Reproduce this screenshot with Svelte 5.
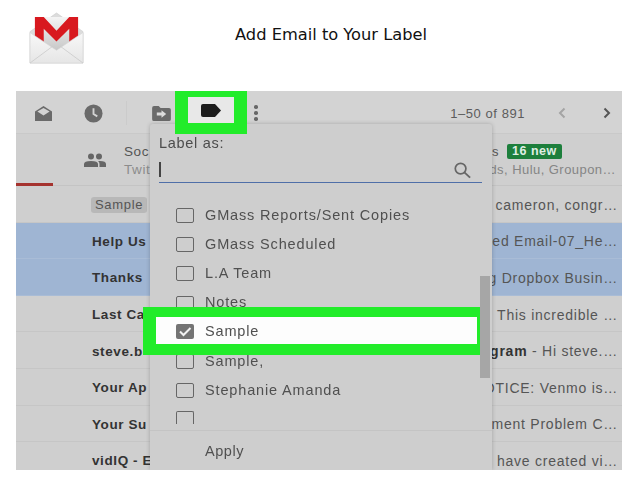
<script>
  const rows = [
    { from: '', label: 'Sample', text: 'cameron, congr…' },
    { from: 'Help Us', text: 'eed Email-07_He…', picked: true },
    { from: 'Thanks', text: 'g Dropbox Busin…', picked: true },
    { from: 'Last Ca', text: 'This incredible …' },
    { from: 'steve.b', strong: 'gram', text: ' - Hi steve.…' },
    { from: 'Your Ap', text: 'OTICE: Venmo is…' },
    { from: 'Your Su', text: 'ment Problem C…' },
    { from: 'vidIQ - E', text: 'have created vi…' }
  ];
  const labels = [
    { name: 'GMass Reports/Sent Copies' },
    { name: 'GMass Scheduled' },
    { name: 'L.A Team' },
    { name: 'Notes' },
    { name: 'Sample', checked: true },
    { name: 'Sample,' },
    { name: 'Stephanie Amanda' },
    { name: '' }
  ];
</script>

<div class="slide">
  <header>
    <svg class="logo" viewBox="0 0 56 54" width="55" height="53">
      <defs>
        <linearGradient id="env" x1="0" y1="0" x2="0" y2="1">
          <stop offset="0" stop-color="#f8f8f8" />
          <stop offset="1" stop-color="#e6e6e6" />
        </linearGradient>
        <linearGradient id="paper" x1="0" y1="0" x2="0" y2="1">
          <stop offset="0" stop-color="#f4f4f4" />
          <stop offset="1" stop-color="#c4c4c4" />
        </linearGradient>
      </defs>
      <path d="M1 20 L28 1 L55 20 V52 H1 Z" fill="#dcdcdc" stroke="#c8c8c8" stroke-width="0.6" />
      <path d="M6 5 H50 V32 L28 42 L6 32 Z" fill="url(#paper)" />
      <path d="M6 5 H15 L28 19 L41 5 H50 V27 L41 32 V17 L28 30 L15 17 V32 L6 27 Z" fill="#d8191f" />
      <path d="M1 21 L28 39 L55 21 V52 H1 Z" fill="url(#env)" stroke="#d2d2d2" stroke-width="0.6" />
      <path d="M1 52 L24 35 M55 52 L32 35" stroke="#c9c9c9" stroke-width="0.8" fill="none" />
    </svg>
    <h1>Add Email to Your Label</h1>
  </header>

  <section class="shot">
    <div class="inner">
      <div class="toolbar">
        <svg class="ic" viewBox="0 0 20 18" width="19" height="17"><path d="M1 7 L10 1 L19 7 V17 H1 Z" fill="#6a6a6a" /><path d="M3.5 7 L10 3.2 L16.5 7 L10 11 Z" fill="#d3d3d3" /></svg>
        <svg class="ic clock" viewBox="0 0 20 20" width="19" height="19"><circle cx="10" cy="10" r="9.5" fill="#6a6a6a" /><path d="M10 4.5 V10.5 L14 13" stroke="#d3d3d3" stroke-width="2" fill="none" /></svg>
        <span class="sep"></span>
        <svg class="ic move" viewBox="0 0 20 16" width="19" height="15"><path d="M0 2 Q0 0 2 0 H7 L9 2 H18 Q20 2 20 4 V14 Q20 16 18 16 H2 Q0 16 0 14 Z" fill="#6a6a6a" /><path d="M5 7 H10 V4.5 L15 8.5 L10 12.5 V10 H5 Z" fill="#dcdcdc" /></svg>
        <span class="dots"><i></i><i></i><i></i></span>
        <span class="count">1–50 of 891</span>
        <svg class="chev dim" viewBox="0 0 10 12" width="10" height="12"><path d="M7.5 1.5 L3 6 L7.5 10.5" fill="none" stroke="#a4a4a4" stroke-width="2" /></svg>
        <svg class="chev next" viewBox="0 0 10 12" width="10" height="12"><path d="M2.5 1.5 L7 6 L2.5 10.5" fill="none" stroke="#555" stroke-width="2" /></svg>
      </div>

      <div class="tabs">
        <div class="tab-line"></div>
        <svg class="people" viewBox="0 0 22 14" width="22" height="14"><circle cx="7" cy="3.5" r="3" fill="#666" /><circle cx="15" cy="3.5" r="3" fill="#666" /><path d="M0 14 V11 Q0 8 7 8 Q14 8 14 11 V14 Z M15.5 14 V11 Q15.5 9 14 8 Q22 7.5 22 11 V14 Z" fill="#666" /></svg>
        <div class="tab-text"><b>Soc</b><span>Twit</span></div>
        <div class="tab-right">
          <div class="promo"><b>s</b><em>16 new</em></div>
          <span class="sub">ods, Hulu, Groupon…</span>
        </div>
      </div>

      {#each rows as r}
        <div class="row" class:picked={r.picked}>
          <span class="from">{#if r.label}<span class="tag">{r.label}</span>{:else}{r.from}{/if}</span>
          <span class="snip">{#if r.strong}<b>{r.strong}</b>{/if}{r.text}</span>
        </div>
      {/each}

      <div class="menu">
        <div class="menu-title">Label as:</div>
        <div class="search">
          <span class="caret"></span>
          <svg viewBox="0 0 20 20" width="19" height="19"><circle cx="8" cy="8" r="5.6" fill="none" stroke="#666" stroke-width="1.8" /><path d="M12 12 L18 17.5" stroke="#666" stroke-width="2" /></svg>
        </div>
        <div class="list">
          {#each labels as l, i}
            <div class="item" class:cut={i === labels.length - 1} class:hit={l.checked}>
              <span class="box" class:on={l.checked}>
                {#if l.checked}
                  <svg viewBox="0 0 18 15" width="18" height="15"><path d="M4 7.5 L7.5 11 L14.5 4" stroke="#f2f2f2" stroke-width="2" fill="none" /></svg>
                {/if}
              </span>
              <span>{l.name}</span>
            </div>
          {/each}
        </div>
        <div class="apply">Apply</div>
        <div class="thumb"></div>
      </div>

      <div class="tag-mark">
        <svg viewBox="0 0 20 13" width="20" height="13"><path d="M2 0 H14 L20 6.5 L14 13 H2 Q0 13 0 11 V2 Q0 0 2 0 Z" fill="#1c1c1c" /></svg>
      </div>
    </div>
  </section>
</div>

<style>
  :global(body) { margin: 0; background: #fff; }
  .slide {
    width: 638px;
    height: 479px;
    overflow: hidden;
    font-family: "Liberation Sans", Arial, sans-serif;
    color: #4a4a4a;
  }
  header {
    height: 91px;
    box-sizing: border-box;
    display: flex;
    align-items: flex-start;
    padding: 12px 0 0 29px;
  }
  .logo { flex: none; }
  h1 {
    margin: 13px 0 0 151px;
    font: 400 16.25px/20px "DejaVu Sans", Verdana, sans-serif;
    color: #111;
    white-space: nowrap;
  }
  .shot {
    margin-left: 16px;
    width: 606px;
    height: 379px;
    overflow: hidden;
  }
  .inner {
    position: relative;
    height: 100%;
    background: #cfcfcf;
    filter: blur(0.35px);
  }
  .toolbar {
    height: 43px;
    display: flex;
    align-items: center;
    box-sizing: border-box;
    padding: 2px 10px 0 18px;
    background: #d3d3d3;
    border-bottom: 1px solid #c9c9c9;
  }
  .ic { flex: none; }
  .clock { margin-left: 31px; }
  .sep { width: 1px; height: 24px; margin-left: 23px; background: #cbcbcb; }
  .move { margin-left: 25px; }
  .dots {
    display: flex;
    flex-direction: column;
    gap: 2.5px;
    margin-left: 83px;
  }
  .dots i { width: 3.5px; height: 3.5px; border-radius: 50%; background: #666; }
  .count {
    margin-left: auto;
    font-size: 13px;
    letter-spacing: 0.55px;
    color: #5c5c5c;
  }
  .chev { flex: none; }
  .chev.dim { margin-left: 32px; }
  .chev.next { margin-left: 35px; }
  .tabs {
    position: relative;
    height: 52px;
    box-sizing: border-box;
    display: flex;
    align-items: center;
    padding: 2px 0 0 68px;
    border-bottom: 1px solid #c4c4c4;
    font-size: 13.5px;
    letter-spacing: 0.6px;
  }
  .people { margin-top: -2px; }
  .tab-line {
    position: absolute;
    left: 0;
    bottom: -1px;
    width: 37px;
    height: 3px;
    background: #a5332f;
  }
  .tab-text { display: flex; flex-direction: column; gap: 3px; margin-left: 18px; }
  .tab-text b { font-weight: 400; color: #555; }
  .tab-text span { color: #8c8c8c; }
  .tab-right {
    margin-left: auto;
    padding-right: 6px;
    display: flex;
    flex-direction: column;
    align-items: flex-end;
    gap: 3px;
  }
  .promo { display: flex; align-items: center; gap: 8px; width: 124px; }
  .promo b { font-weight: 400; color: #555; font-size: 13px; }
  .promo em {
    font-style: normal;
    font-weight: 700;
    font-size: 12.5px;
    letter-spacing: 0.5px;
    line-height: 15px;
    padding: 0 5px;
    border-radius: 2px;
    color: #dfeee3;
    background: #1d7f3c;
  }
  .sub { color: #858585; font-size: 13px; letter-spacing: 0.45px; white-space: nowrap; }
  .row {
    height: 36.6px;
    box-sizing: border-box;
    display: flex;
    align-items: center;
    justify-content: space-between;
    padding: 2px 4px 0 76px;
    border-bottom: 1px solid #c6c6c6;
    font-size: 13.5px;
    letter-spacing: 0.6px;
    white-space: nowrap;
  }
  .row.picked { background: #9fb5d3; border-bottom-color: #a9bcd6; }
  .from { font-weight: 700; color: #333; }
  .tag {
    display: inline-block;
    margin-left: -1px;
    padding: 0 4px;
    font-weight: 400;
    font-size: 13px;
    letter-spacing: 0.7px;
    line-height: 16px;
    border-radius: 3px;
    color: #555;
    background: #b8b8b8;
  }
  .snip { color: #555; font-size: 14px; letter-spacing: 0.75px; }
  .snip b { color: #333; }
  .menu {
    position: absolute;
    left: 134px;
    top: 33px;
    width: 342px;
    bottom: 0;
    box-sizing: border-box;
    padding: 11px 10px 0 9px;
    background: #cecece;
    border-radius: 3px 3px 0 0;
    box-shadow: 0 0 4px rgba(0, 0, 0, 0.22);
  }
  .menu-title { font-size: 14.5px; line-height: 17px; letter-spacing: 0.7px; color: #4c4c4c; }
  .search {
    display: flex;
    align-items: center;
    justify-content: space-between;
    height: 27px;
    margin-top: 3px;
    padding-right: 10px;
    border-bottom: 1.5px solid #4f6fa8;
  }
  .caret { width: 1.5px; height: 15px; background: #444; margin-top: 2px; }
  .search svg { margin-top: 3px; }
  .list { margin-top: 17px; padding-left: 17px; }
  .item {
    height: 29.2px;
    display: flex;
    align-items: center;
    gap: 11px;
    font-size: 14.5px;
    letter-spacing: 0.85px;
    color: #505050;
    white-space: nowrap;
  }
  /* the green call-out box is the Sample row itself, blown up over its neighbours */
  .item.hit {
    position: relative;
    box-sizing: border-box;
    width: 347px;
    height: 48px;
    margin: -9.4px 0 -9.4px -33px;
    padding-left: 20px;
    border: solid #22ec2a;
    border-width: 10px 13px 11px;
    background: #fdfdfd;
  }
  .box {
    flex: none;
    width: 18px;
    height: 15px;
    margin-top: 2px;
    border: 1.5px solid #666;
    border-radius: 2px;
    box-sizing: border-box;
    display: block;
  }
  .box.on {
    background: #747474;
    border: 0;
    display: grid;
    place-items: center;
    overflow: hidden;
    margin-top: 1px;
  }
  .item.cut .box { height: 13px; margin-top: -2px; border-bottom: none; border-radius: 2px 2px 0 0; }
  .apply {
    position: absolute;
    left: 55px;
    right: 0;
    top: 306px;
    padding-top: 13px;
    font-size: 14.5px;
    letter-spacing: 0.55px;
    color: #505050;
  }
  .apply::before {
    content: '';
    position: absolute;
    left: -55px;
    right: 0;
    top: 0;
    border-top: 1px solid #c4c4c4;
  }
  .thumb {
    position: absolute;
    left: 330px;
    top: 152px;
    width: 10px;
    height: 102px;
    background: #a6a6a6;
  }
  .tag-mark {
    position: absolute;
    left: 159px;
    top: 0;
    width: 72px;
    height: 43px;
    box-sizing: border-box;
    border: solid #22ec2a;
    border-width: 6px 13px 11px;
    background: #e8e8e8;
    display: grid;
    place-items: center;
  }
</style>
